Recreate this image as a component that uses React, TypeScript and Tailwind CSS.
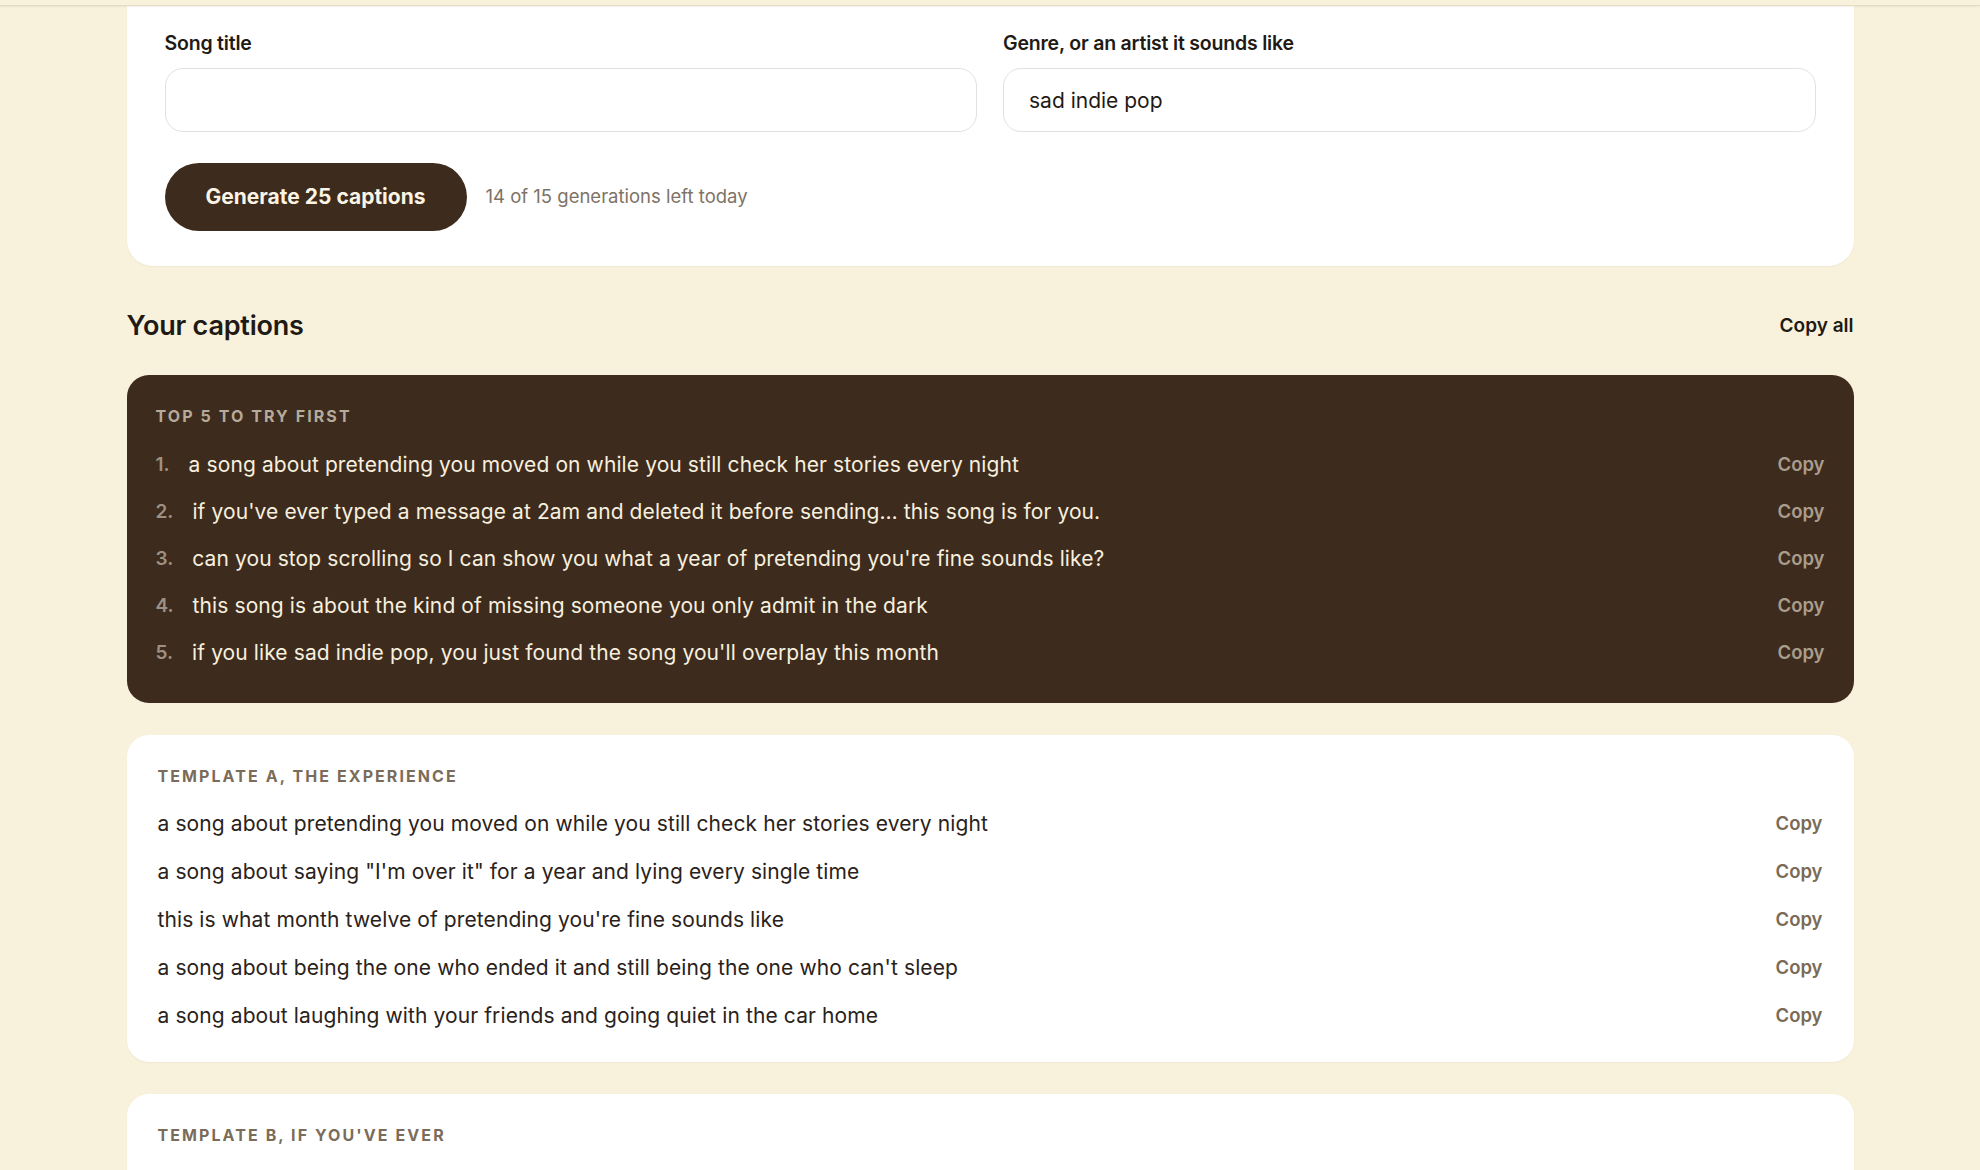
import React from "react";

const FONT = "font-['Inter','Noto_Sans',sans-serif]";

const top5 = [
  "a song about pretending you moved on while you still check her stories every night",
  "if you've ever typed a message at 2am and deleted it before sending… this song is for you.",
  "can you stop scrolling so I can show you what a year of pretending you're fine sounds like?",
  "this song is about the kind of missing someone you only admit in the dark",
  "if you like sad indie pop, you just found the song you'll overplay this month",
];

const templates = [
  {
    title: "Template A, the experience",
    items: [
      "a song about pretending you moved on while you still check her stories every night",
      'a song about saying "I\'m over it" for a year and lying every single time',
      "this is what month twelve of pretending you're fine sounds like",
      "a song about being the one who ended it and still being the one who can't sleep",
      "a song about laughing with your friends and going quiet in the car home",
    ],
  },
  {
    title: "Template B, if you've ever",
    items: [],
  },
];

export default function App() {
  return (
    <div className={`h-screen overflow-hidden bg-[#f8f1dc] ${FONT} text-[#1f1a14]`}>
      {/* top sticky bar edge */}
      <div className="h-[6px] bg-[#f8f1dc] border-b border-[#e6dcc4] shadow-[0_1px_2px_rgba(0,0,0,0.06)] relative z-10" />

      <main className="w-[1727px] mx-auto">
        {/* form card */}
        <section className="bg-white rounded-b-[26px] px-[38px] pt-[26px] pb-[35px] shadow-[0_1px_2px_rgba(0,0,0,0.04)]">
          <div className="grid grid-cols-2 gap-[26px]">
            <Field label="Song title" value="" />
            <Field label="Genre, or an artist it sounds like" value="sad indie pop" />
          </div>
          <div className="mt-[31px] flex items-center gap-[19px]">
            <button
              type="button"
              className="h-[68px] w-[302px] rounded-full bg-[#3d2b1d] text-[#fbf4e4] text-[21px] font-bold"
            >
              Generate 25 captions
            </button>
            <span className="text-[18.5px] text-[#7d7367]">
              14 of 15 generations left today
            </span>
          </div>
        </section>

        {/* heading */}
        <div className="mt-[40px] mb-[28px] flex items-center justify-between">
          <h2 className="text-[27px] font-semibold tracking-[-0.2px] text-[#1f1a14]">Your captions</h2>
          <button type="button" className="text-[19px] font-semibold text-[#1f1a14]">
            Copy all
          </button>
        </div>

        {/* top 5 */}
        <section className="bg-[#3d2b1d] rounded-[22px] px-[29px] pt-[31px] pb-[26px]">
          <h3 className="text-[16px] leading-[20px] font-bold uppercase tracking-[0.13em] text-[#b6aa9a] mb-[16px]">
            Top 5 to try first
          </h3>
          <ul>
            {top5.map((t, i) => (
              <li key={i} className="h-[47px] flex items-center justify-between">
                <div className="flex items-center">
                  <span className="mr-[19px] text-[19px] font-semibold text-[#9d9183]">{i + 1}.</span>
                  <span className="text-[21px] text-[#f7efdf] tracking-[0.1px]">{t}</span>
                </div>
                <button type="button" className="text-[18.5px] font-semibold text-[#a99d8d]">
                  Copy
                </button>
              </li>
            ))}
          </ul>
        </section>

        {templates.map((tpl) => (
          <section
            key={tpl.title}
            className="mt-[32px] min-h-[200px] bg-white rounded-[22px] px-[31px] pt-[31px] pb-[22px] shadow-[0_1px_2px_rgba(0,0,0,0.04)]"
          >
            <h3 className="text-[16px] leading-[20px] font-bold uppercase tracking-[0.13em] text-[#7b6c5a] mb-[14px]">
              {tpl.title}
            </h3>
            <ul>
              {tpl.items.map((t, i) => (
                <li key={i} className="h-[48px] flex items-center justify-between">
                  <span className="text-[21px] text-[#2a221a] tracking-[0.1px]">{t}</span>
                  <button type="button" className="text-[18.5px] font-semibold text-[#7b6a55]">
                    Copy
                  </button>
                </li>
              ))}
            </ul>
          </section>
        ))}
      </main>
    </div>
  );
}

function Field({ label, value }: { label: string; value: string }) {
  return (
    <label className="flex flex-col">
      <span className="text-[19.5px] leading-[22px] font-semibold text-[#1f1a14] tracking-[-0.2px]">{label}</span>
      <input
        readOnly
        value={value}
        className="mt-[14px] h-[64px] rounded-[18px] border-[1.5px] border-[#e3e1dd] bg-white px-[25px] text-[21px] text-[#1f1a14] outline-none"
      />
    </label>
  );
}
